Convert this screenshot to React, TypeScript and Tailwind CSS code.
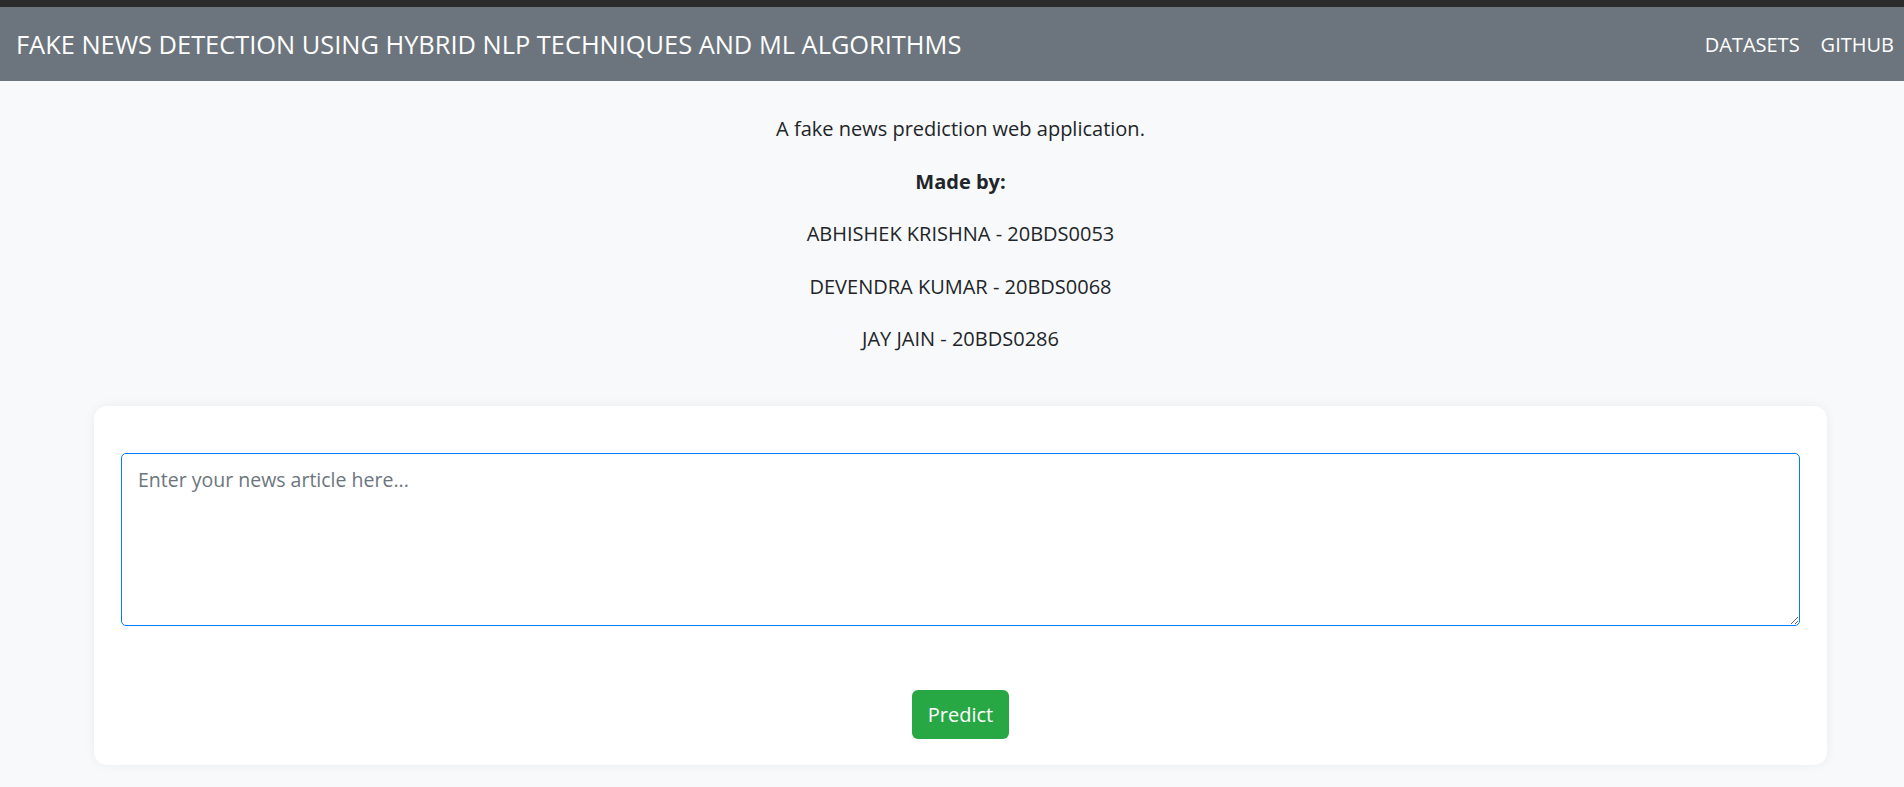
import { useState } from "react";

const members = [
  "ABHISHEK KRISHNA - 20BDS0053",
  "DEVENDRA KUMAR - 20BDS0068",
  "JAY JAIN - 20BDS0286",
];

function Navbar() {
  return (
    <nav className="flex h-[74px] items-center justify-between bg-[#6c757d] pl-[16px] pr-[10px] text-white">
      <a href="#" className="text-[25.4px] leading-[36px]">
        FAKE NEWS DETECTION USING HYBRID NLP TECHNIQUES AND ML ALGORITHMS
      </a>
      <div className="flex items-center gap-[21px] text-[20px] leading-[31px]">
        <a href="#">DATASETS</a>
        <a href="#">GITHUB</a>
      </div>
    </nav>
  );
}

export default function App() {
  const [article, setArticle] = useState("");

  return (
    <div
      className="min-h-screen bg-[#f8f9fa] text-[#212529]"
      style={{ fontFamily: '"Open Sans", "Noto Sans", Arial, sans-serif' }}
    >
      {/* browser strip above the navbar */}
      <div className="h-[7px] bg-[#2b2b2b]" />
      <Navbar />

      <main className="ml-[94px] mr-[77px] pb-[22px]">
        <div className="pt-[32px] text-center text-[20px] leading-[31px]">
          <p className="mb-[21.5px]">A fake news prediction web application.</p>
          <p className="mb-[21.5px] font-bold">Made by:</p>
          {members.map((m) => (
            <p key={m} className="mb-[21.5px]">
              {m}
            </p>
          ))}
        </div>

        <div className="mt-[52px] rounded-[13px] bg-white px-[27px] pt-[47px] pb-[26px] shadow-[0_0_12px_rgba(0,0,0,0.06)]">
          <textarea
            value={article}
            onChange={(e) => setArticle(e.target.value)}
            placeholder="Enter your news article here..."
            className="block h-[173px] w-full rounded-[5px] border border-[#007bff] px-[16px] py-[10px] text-[19.5px] leading-[31px] text-[#495057] outline-none placeholder:text-[#6c757d]"
          />
          <div className="mt-[64px] flex justify-center">
            <button
              type="button"
              className="h-[49px] w-[97px] rounded-[6px] bg-[#28a745] text-[20px] text-white hover:bg-[#218838]"
            >
              Predict
            </button>
          </div>
        </div>
      </main>
    </div>
  );
}
